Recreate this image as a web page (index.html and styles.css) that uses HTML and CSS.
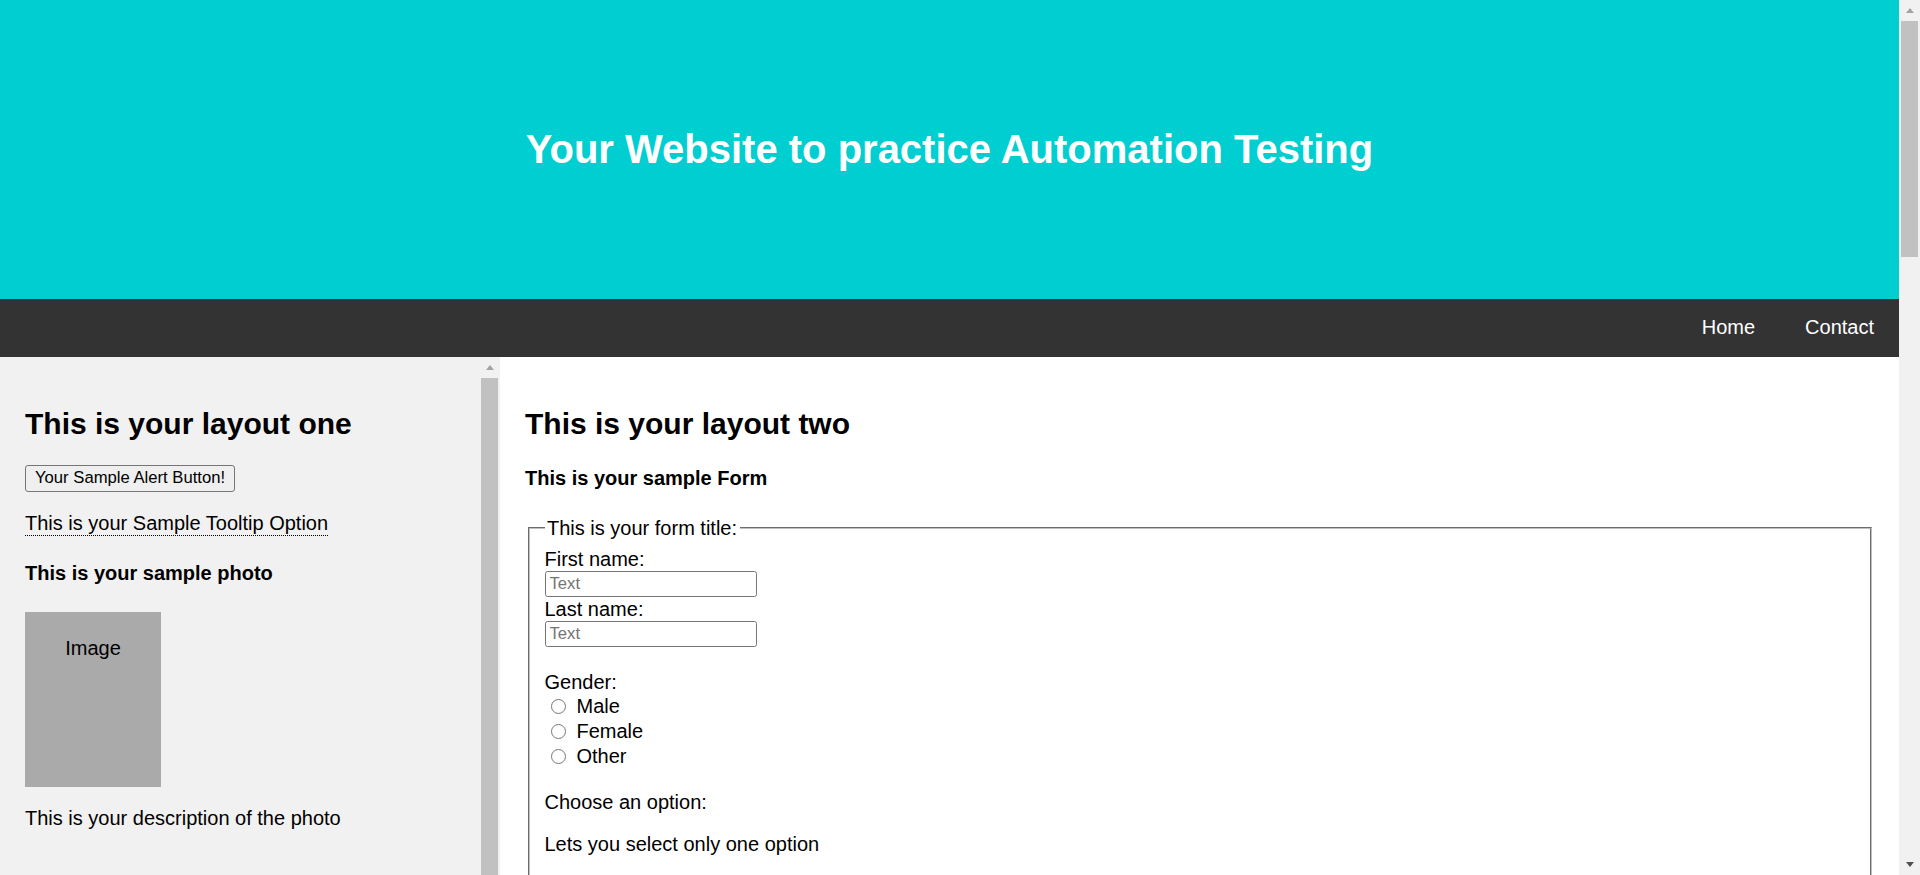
FILE: index.html
```html
<!DOCTYPE html>
<html lang="en">
<head>
<meta charset="utf-8">
<title>Automation Testing Practice</title>
<link rel="stylesheet" href="styles.css">
</head>
<body>
<div class="page">
  <header class="header">
    <h1>Your Website to practice Automation Testing</h1>
  </header>
  <nav class="navbar">
    <a href="#" class="nav-link">Home</a>
    <a href="#" class="nav-link">Contact</a>
  </nav>
  <div class="row">
    <aside class="side">
      <div class="side-content">
        <h2 class="layout-title">This is your layout one</h2>
        <div class="alert-row"><button type="button" class="alert-btn">Your Sample Alert Button!</button></div>
        <p class="tooltip-row"><span class="tooltip">This is your Sample Tooltip Option</span></p>
        <h4 class="sub-title">This is your sample photo</h4>
        <div class="fakeimg">Image</div>
        <p class="photo-desc">This is your description of the photo</p>
      </div>
      <div class="scrollbar inner-scroll">
        <div class="sb-btn"><span class="arrow-up"></span></div>
        <div class="sb-thumb long"></div>
      </div>
    </aside>
    <main class="main">
      <h2 class="layout-title">This is your layout two</h2>
      <h4 class="sub-title">This is your sample Form</h4>
      <fieldset class="form-box">
        <legend class="form-legend">This is your form title:</legend>
        <div class="line">First name:</div>
        <input type="text" class="text-input" placeholder="Text">
        <div class="line">Last name:</div>
        <input type="text" class="text-input" placeholder="Text">
        <div class="line"></div>
        <div class="line">Gender:</div>
        <label class="radio-row"><input type="radio" name="gender" class="radio">Male</label>
        <label class="radio-row"><input type="radio" name="gender" class="radio">Female</label>
        <label class="radio-row"><input type="radio" name="gender" class="radio">Other</label>
        <p class="choose">Choose an option:</p>
        <p class="choose-desc">Lets you select only one option</p>
      </fieldset>
    </main>
  </div>
</div>
<div class="scrollbar page-scroll">
  <div class="sb-btn"><span class="arrow-up"></span></div>
  <div class="sb-thumb short"></div>
  <div class="sb-spacer"></div>
  <div class="sb-btn"><span class="arrow-down"></span></div>
</div>
</body>
</html>
```
FILE: styles.css
```css
html, body {
  margin: 0;
  padding: 0;
  height: 875px;
  overflow: hidden;
}

body {
  display: flex;
  font-family: "Liberation Sans", Arial, sans-serif;
  font-size: 20px;
  color: #000;
  background: #fff;
}

.page {
  flex: 1;
  min-width: 0;
  display: flex;
  flex-direction: column;
  height: 875px;
  overflow: hidden;
}

/* Header */
.header {
  background: #00ced1;
  color: #fff;
  text-align: center;
  padding: 100px;
  flex: none;
}

.header h1 {
  margin: 26.8px 0;
  font-size: 40px;
  font-weight: bold;
  line-height: normal;
}

/* Navbar */
.navbar {
  background: #333;
  display: flex;
  justify-content: flex-end;
  flex: none;
}

.nav-link {
  display: block;
  color: #fff;
  text-decoration: none;
  padding: 17.5px 25px;
  font-size: 20px;
  line-height: 23px;
}

/* Row */
.row {
  flex: 1;
  min-height: 0;
  display: flex;
  overflow: hidden;
}

.side {
  width: 500px;
  flex: none;
  display: flex;
  background: #f1f1f1;
}

.side-content {
  flex: 1;
  padding: 25px;
}

.main {
  flex: 1;
  background: #fff;
  padding: 25px;
  min-width: 0;
}

.layout-title {
  font-size: 30px;
  font-weight: bold;
  margin: 25px 0 24px;
  line-height: normal;
}

.sub-title {
  font-size: 20px;
  font-weight: bold;
  margin: 26.6px 0;
  line-height: 23px;
}

.alert-row {
  height: 26px;
}

.alert-btn {
  font-family: "Liberation Sans", Arial, sans-serif;
  font-size: 16.67px;
  line-height: normal;
  color: #000;
  background: #efefef;
  border: 1px solid #767676;
  border-radius: 3px;
  padding: 2.5px 9px;
  margin: 0;
}

.tooltip-row {
  margin: 21px 0 0;
  line-height: 23px;
}

.tooltip {
  display: inline-block;
  border-bottom: 1px dotted #000;
}

.fakeimg {
  width: 86px;
  height: 125px;
  padding: 25px;
  background: #aaa;
  text-align: center;
  line-height: 23px;
}

.photo-desc {
  margin: 20px 0 0;
  line-height: 23px;
}

/* Fieldset form */
.form-box {
  margin: 0 2.5px;
  padding: 8px 15px 12.5px;
  border: 2px groove #c0c0c0;
  min-width: 0;
  min-height: 600px;
}

.form-legend {
  padding: 0 2.5px;
  font-size: 20px;
  line-height: 23px;
}

.line {
  height: 23px;
  line-height: 23px;
}

.text-input {
  display: block;
  box-sizing: border-box;
  width: 212px;
  height: 26px;
  margin: 0 0 1px;
  padding: 0 4px;
  border: 1px solid #767676;
  border-radius: 2.5px;
  font-family: "Liberation Sans", Arial, sans-serif;
  font-size: 16.67px;
  color: #000;
  background: #fff;
}

.text-input::placeholder {
  color: #757575;
}

.radio-row {
  display: flex;
  align-items: center;
  height: 25px;
  line-height: 23px;
}

.radio {
  appearance: none;
  -webkit-appearance: none;
  box-sizing: border-box;
  width: 15px;
  height: 15px;
  margin: 0 11px 0 6px;
  border: 1px solid #767676;
  border-radius: 50%;
  background: #fff;
}

.choose {
  margin: 22px 0 0;
  line-height: 23px;
}

.choose-desc {
  margin: 19px 0 0;
  line-height: 23px;
}

/* Scrollbars */
.scrollbar {
  width: 21px;
  flex: none;
  background: #f1f1f1;
  display: flex;
  flex-direction: column;
  align-items: center;
}

.page-scroll {
  height: 875px;
}

.sb-btn {
  height: 21px;
  width: 21px;
  flex: none;
  display: flex;
  align-items: center;
  justify-content: center;
}

.arrow-up {
  width: 0;
  height: 0;
  border-left: 4.5px solid transparent;
  border-right: 4.5px solid transparent;
  border-bottom: 5px solid #a3a3a3;
}

.arrow-down {
  width: 0;
  height: 0;
  border-left: 4.5px solid transparent;
  border-right: 4.5px solid transparent;
  border-top: 5px solid #505050;
}

.sb-thumb {
  width: 17px;
  flex: none;
  background: #c1c1c1;
}

.sb-thumb.short {
  height: 236px;
}

.sb-thumb.long {
  height: 700px;
}

.sb-spacer {
  flex: 1;
}
```
